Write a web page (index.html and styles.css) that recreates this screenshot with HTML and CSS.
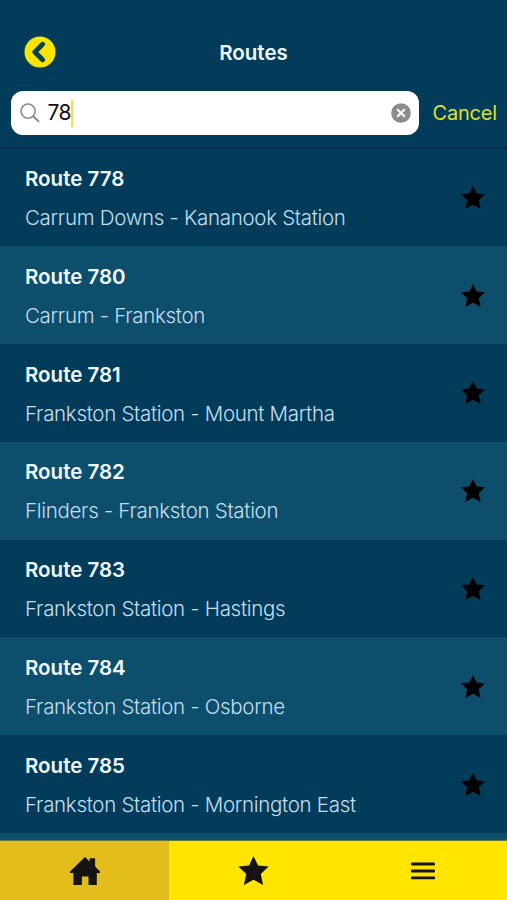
FILE: index.html
```html
<!DOCTYPE html>
<html lang="en">
<head>
  <meta charset="UTF-8">
  <meta name="viewport" content="width=device-width, initial-scale=1.0">
  <title>Routes</title>
  <link rel="stylesheet" href="styles.css">
</head>
<body>
  <!-- Shared icons -->
  <svg class="sprite">
    <symbol id="star" viewBox="0 0 24 23">
      <path d="M12 0l3.6 7.5 8.4.8-6.2 6L19.6 23 12 18.8 4.4 23l1.8-8.7L0 8.3l8.4-.8z"/>
    </symbol>
  </svg>

  <div class="app">
    <header class="header">
      <button class="back-btn" aria-label="Back">
        <svg width="32" height="32" viewBox="0 0 32 32">
          <circle cx="16" cy="16" r="15.5" fill="#f9e600"/>
          <path d="M18.6 8.3L10.8 16l7.8 7.7" fill="none" stroke="#0c3f50" stroke-width="5" stroke-linejoin="round" stroke-linecap="round"/>
        </svg>
      </button>
      <h1>Routes</h1>
    </header>

    <div class="search">
      <div class="search-box">
        <svg class="search-icon" width="20" height="20" viewBox="0 0 20 20" fill="none" stroke="#8b8b90" stroke-width="1.6">
          <circle cx="8.1" cy="8.1" r="7.1"/>
          <path d="M13.2 13.2l5.8 5.6" stroke-width="2"/>
        </svg>
        <span class="query">78</span><span class="caret"></span>
        <svg class="clear-icon" width="20" height="20" viewBox="0 0 20 20">
          <circle cx="10" cy="10" r="9.8" fill="#8b8b90"/>
          <path d="M6.2 6.2l7.6 7.6M13.8 6.2l-7.6 7.6" stroke="#fff" stroke-width="2"/>
        </svg>
      </div>
      <button class="cancel-btn">Cancel</button>
    </div>

    <ul class="routes">
      <li class="route">
        <div><h2>Route 778</h2><p>Carrum Downs - Kananook Station</p></div>
        <svg class="fav"><use href="#star"/></svg>
      </li>
      <li class="route">
        <div><h2>Route 780</h2><p>Carrum - Frankston</p></div>
        <svg class="fav"><use href="#star"/></svg>
      </li>
      <li class="route">
        <div><h2>Route 781</h2><p>Frankston Station - Mount Martha</p></div>
        <svg class="fav"><use href="#star"/></svg>
      </li>
      <li class="route">
        <div><h2>Route 782</h2><p>Flinders - Frankston Station</p></div>
        <svg class="fav"><use href="#star"/></svg>
      </li>
      <li class="route">
        <div><h2>Route 783</h2><p>Frankston Station - Hastings</p></div>
        <svg class="fav"><use href="#star"/></svg>
      </li>
      <li class="route">
        <div><h2>Route 784</h2><p>Frankston Station - Osborne</p></div>
        <svg class="fav"><use href="#star"/></svg>
      </li>
      <li class="route">
        <div><h2>Route 785</h2><p>Frankston Station - Mornington East</p></div>
        <svg class="fav"><use href="#star"/></svg>
      </li>
      <li class="route"></li>
    </ul>

    <nav class="tabs">
      <a class="tab active" aria-label="Home">
        <svg width="30" height="28" viewBox="0 0 30 28">
          <path d="M15 0l4.6 4.4V1.2h5.5v8.4l4.9 4.8V16h-3.2v12h-8.3v-8.5h-6.6V28H3.4V16H0v-1.6z"/>
        </svg>
      </a>
      <a class="tab" aria-label="Favourites">
        <svg width="31" height="29"><use href="#star"/></svg>
      </a>
      <a class="tab" aria-label="Menu">
        <svg width="24" height="18" viewBox="0 0 24 18">
          <path d="M1 2h22M1 9h22M1 15.8h22" stroke="#141414" stroke-width="2.8" stroke-linecap="round"/>
        </svg>
      </a>
    </nav>
  </div>
</body>
</html>
```
FILE: styles.css
```css
* {
  margin: 0;
  padding: 0;
  box-sizing: border-box;
}

body {
  font-family: Inter, "Liberation Sans", sans-serif;
  background: #033c5b;
  color: #fff;
}

button {
  border: none;
  background: none;
  font-family: inherit;
  cursor: pointer;
}

svg {
  display: block;
}

.sprite {
  display: none;
}

.app {
  display: flex;
  flex-direction: column;
  height: 100vh;
  overflow: hidden;
}

/* Header */
.header {
  display: grid;
  grid-template-columns: 60px 1fr 60px;
  align-items: center;
  height: 91px;
  padding: 13px 0 0;
  flex-shrink: 0;
}

.back-btn {
  padding-left: 24px;
}

.header h1 {
  font-size: 20.5px;
  font-weight: 600;
  text-align: center;
  color: #f0f9ff;
}

/* Search bar */
.search {
  display: flex;
  align-items: flex-start;
  height: 57.5px;
  padding: 0 10px 0 10.5px;
  border-bottom: 2px solid #04314f;
  flex-shrink: 0;
}

.search-box {
  display: flex;
  align-items: center;
  width: 408.5px;
  height: 44px;
  flex-shrink: 0;
  padding: 0 8px 0 9px;
  border-radius: 12px;
  background: #fff;
  color: #111;
}

.query {
  margin-left: 8px;
  font-size: 21px;
  line-height: 24px;
  padding-bottom: 1px;
  letter-spacing: -0.6px;
}

.caret {
  width: 2px;
  height: 27px;
  background: #f6dc3c;
}

.clear-icon {
  margin-left: auto;
}

.cancel-btn {
  height: 43px;
  margin-left: 13.5px;
  font-size: 20px;
  letter-spacing: -0.2px;
  color: #dbe32f;
}

/* Route list */
.routes {
  flex: 1;
  min-height: 0;
  overflow: hidden;
  list-style: none;
}

.route {
  display: flex;
  justify-content: space-between;
  align-items: center;
  height: 97.8px;
  padding: 0 22px 0 25px;
}

.route:nth-child(even) {
  background: #0e4e6d;
}

.route div {
  padding-top: 1.2px;
}

.route h2 {
  font-size: 20.5px;
  font-weight: 600;
  line-height: 39px;
  color: #f0f9ff;
}

.route p {
  font-size: 20.5px;
  font-weight: 300;
  line-height: 39px;
  letter-spacing: -0.3px;
  color: #c3dff0;
}

.fav {
  width: 24px;
  height: 23px;
}

/* Bottom tabs */
.tabs {
  display: grid;
  grid-template-columns: repeat(3, 1fr);
  height: 60px;
  border-top: 1px solid #65733a;
  background: #ffe500;
  flex-shrink: 0;
}

.tab {
  display: flex;
  justify-content: center;
  align-items: center;
  fill: #141414;
}

.tab.active {
  background: #e3bd1c;
}
```
